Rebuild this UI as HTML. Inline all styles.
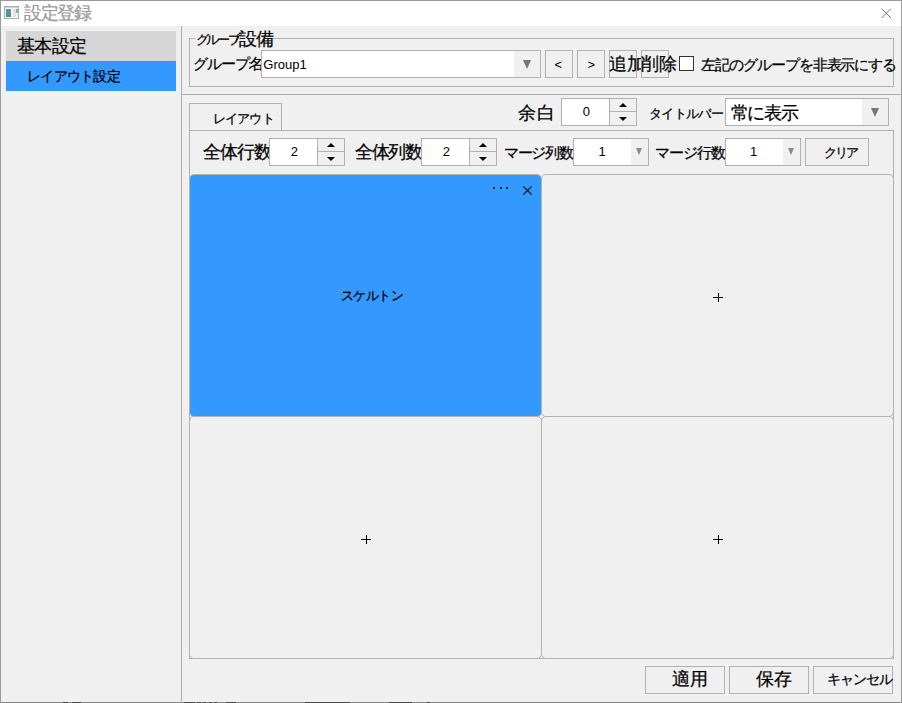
<!DOCTYPE html>
<html><head><meta charset="utf-8">
<style>
*{box-sizing:border-box;margin:0;padding:0}
html,body{width:902px;height:703px;overflow:hidden;background:#f0f0f0}
body{position:relative;font-family:"Liberation Sans",sans-serif;font-size:12px;color:#000}
.a{position:absolute}
.t{position:absolute;white-space:nowrap;line-height:20px;height:20px}
.j{-webkit-text-stroke:0.25px currentColor}
.tri{position:absolute;width:0;height:0;border-left:4.5px solid transparent;border-right:4.5px solid transparent;border-top:9px solid #777}
.tri2{position:absolute;width:0;height:0;border-left:3.5px solid transparent;border-right:3.5px solid transparent;border-top:7px solid #888}
.up{position:absolute;width:0;height:0;border-left:4px solid transparent;border-right:4px solid transparent;border-bottom:4px solid #000}
.dn{position:absolute;width:0;height:0;border-left:4px solid transparent;border-right:4px solid transparent;border-top:4px solid #000}
.cell{position:absolute;border:1px solid #b4b4b4;border-radius:5px;background:#f0f0f0}
</style></head><body>
<div class="a" style="left:0px;top:0px;width:902px;height:703px;border:1px solid #9a9a9a;border-bottom-color:#858585"></div>
<div class="a" style="left:1px;top:1px;width:900px;height:25px;background:#fff"></div>
<div class="a" style="left:4px;top:6px;width:15px;height:13px;border:1px solid #aab0b6;background:#f6f6f6">
  <div class="a" style="left:0;top:0;width:13px;height:1px;background:#cfd3d8"></div>
  <div class="a" style="left:1px;top:2px;width:5px;height:8px;background:linear-gradient(#5f8ec8,#3da552)"></div>
  <div class="a" style="left:8px;top:2px;width:3px;height:8px;background:#e2e2e2"></div>
  <div class="a" style="left:11px;top:2px;width:2px;height:4px;background:linear-gradient(#7aa3d6,#7cc47a)"></div>
</div>
<div class="t j" style="left:23.75px;top:2.88px;font-size:17.5px;letter-spacing:-1.18px;color:#9a9a9a">設定登録</div>
<svg class="a" style="left:880px;top:7px" width="13" height="12" viewBox="0 0 13 12"><path d="M1.6 1.6L11 11M11 1.6L1.6 11" stroke="#707070" stroke-width="0.95"/></svg>
<div class="a" style="left:6px;top:31px;width:170px;height:30px;background:#d6d6d6"></div>
<div class="t j" style="left:16.69px;top:36.38px;font-size:17.5px;letter-spacing:-0.50px">基本設定</div>
<div class="a" style="left:6px;top:61px;width:170px;height:30px;background:#3399ff"></div>
<div class="t j" style="left:27.08px;top:66.70px;font-size:13.61px;letter-spacing:-0.73px">レイアウト設定</div>
<div class="a" style="left:181px;top:26px;width:1px;height:677px;background:#acacac"></div>
<div class="a" style="left:189px;top:38px;width:705px;height:49px;border:1px solid #b0b0b0"></div>
<div class="a" style="left:195px;top:30px;width:73px;height:16px;background:#f0f0f0"></div>
<div class="t j" style="left:195.63px;top:29.55px;font-size:12.5px;letter-spacing:-2.14px">グループ</div>
<div class="t" style="left:235px;top:28.5px;font-size:13px">/</div>
<div class="t j" style="left:238.81px;top:28.50px;font-size:17.5px;letter-spacing:-0.65px">設備</div>
<div class="t j" style="left:193.18px;top:53.88px;font-size:15.19px;letter-spacing:-1.04px">グループ名</div>
<div class="t" style="left:248.0px;top:54.5px;font-size:13px">:</div>
<div class="a" style="left:261px;top:50px;width:280px;height:28px;border:1px solid #b0b0b0;background:#fff"></div>
<div class="a" style="left:514px;top:51px;width:26px;height:26px;background:#f0f0f0"></div>
<div class="tri" style="left:522.5px;top:60px"></div>
<div class="t" style="left:263.3px;top:55.3px;font-size:13px">Group1</div>
<div class="a" style="left:545px;top:50px;width:28px;height:28px;border:1px solid #b0b0b0;background:#f0f0f0"></div>
<div class="t" style="left:554.5px;top:55px;font-size:13px">&lt;</div>
<div class="a" style="left:577px;top:50px;width:28px;height:28px;border:1px solid #b0b0b0;background:#f0f0f0"></div>
<div class="t" style="left:587.5px;top:55px;font-size:13px">&gt;</div>
<div class="a" style="left:609px;top:50px;width:28px;height:28px;border:1px solid #b0b0b0;background:#f0f0f0"></div>
<div class="t j" style="left:609.25px;top:53.56px;font-size:17.5px;letter-spacing:-0.09px">追加</div>
<div class="a" style="left:641px;top:50px;width:28px;height:28px;border:1px solid #b0b0b0;background:#f0f0f0"></div>
<div class="t j" style="left:641.31px;top:53.56px;font-size:17.5px;letter-spacing:-0.59px">削除</div>
<div class="a" style="left:679px;top:56px;width:15px;height:15px;border:1px solid #333;background:#fff"></div>
<div class="t j" style="left:700.69px;top:54.61px;font-size:15.12px;letter-spacing:-1.02px">左記のグループを非表示にする</div>
<div class="a" style="left:181px;top:94px;width:721px;height:1px;background:#acacac"></div>
<div class="t j" style="left:518.43px;top:102.56px;font-size:17.5px;letter-spacing:0.79px">余白</div>
<div class="t" style="left:549.2px;top:103.5px;font-size:13px">:</div>
<div class="a" style="left:561px;top:98px;width:76px;height:28px;border:1px solid #b0b0b0;background:#fff"></div>
<div class="a" style="left:609px;top:99px;width:27px;height:26px;background:#f0f0f0;border-left:1px solid #b0b0b0"></div>
<div class="a" style="left:610px;top:111px;width:26px;height:1px;background:#b0b0b0"></div>
<div class="up" style="left:619px;top:103px"></div>
<div class="dn" style="left:619px;top:117px"></div>
<div class="t" style="left:582.7px;top:102px;font-size:13px">0</div>
<div class="t j" style="left:648.71px;top:103.96px;font-size:12.89px;letter-spacing:-0.58px">タイトルバー</div>
<div class="t" style="left:708.5px;top:103.5px;font-size:13px">:</div>
<div class="a" style="left:725px;top:98px;width:164px;height:28px;border:1px solid #b0b0b0;background:#fff"></div>
<div class="a" style="left:862px;top:99px;width:26px;height:26px;background:#f0f0f0"></div>
<div class="tri" style="left:870.5px;top:108px"></div>
<div class="t j" style="left:730.69px;top:103.26px;font-size:17.5px;letter-spacing:-1.33px">常に表示</div>
<div class="a" style="left:189px;top:130px;width:705px;height:529px;border:1px solid #b0b0b0"></div>
<div class="a" style="left:189px;top:103px;width:93px;height:27px;border:1px solid #b0b0b0;border-bottom:none;background:#f0f0f0"></div>
<div class="t j" style="left:213.07px;top:108.96px;font-size:12.5px;letter-spacing:-0.86px">レイアウト</div>
<div class="t j" style="left:202.93px;top:141.94px;font-size:17.5px;letter-spacing:-1.07px">全体行数</div>
<div class="t" style="left:256.9px;top:142.5px;font-size:13px">:</div>
<div class="a" style="left:269px;top:138px;width:76px;height:28px;border:1px solid #b0b0b0;background:#fff"></div>
<div class="a" style="left:317px;top:139px;width:27px;height:26px;background:#f0f0f0;border-left:1px solid #b0b0b0"></div>
<div class="a" style="left:318px;top:151px;width:26px;height:1px;background:#b0b0b0"></div>
<div class="up" style="left:327px;top:143px"></div>
<div class="dn" style="left:327px;top:157px"></div>
<div class="t" style="left:290.7px;top:142px;font-size:13px">2</div>
<div class="t j" style="left:355.25px;top:141.94px;font-size:17.5px;letter-spacing:-1.39px">全体列数</div>
<div class="t" style="left:409.1px;top:142.5px;font-size:13px">:</div>
<div class="a" style="left:421px;top:138px;width:76px;height:28px;border:1px solid #b0b0b0;background:#fff"></div>
<div class="a" style="left:469px;top:139px;width:27px;height:26px;background:#f0f0f0;border-left:1px solid #b0b0b0"></div>
<div class="a" style="left:470px;top:151px;width:26px;height:1px;background:#b0b0b0"></div>
<div class="up" style="left:479px;top:143px"></div>
<div class="dn" style="left:479px;top:157px"></div>
<div class="t" style="left:442.7px;top:142px;font-size:13px">2</div>
<div class="t j" style="left:503.61px;top:142.99px;font-size:15.33px;letter-spacing:-1.07px">マージ列数</div>
<div class="t" style="left:560.9px;top:142.5px;font-size:13px">:</div>
<div class="a" style="left:573px;top:138px;width:76px;height:28px;border:1px solid #b0b0b0;background:#fff"></div>
<div class="a" style="left:631px;top:139px;width:17px;height:26px;background:#f0f0f0"></div>
<div class="tri2" style="left:636px;top:148px"></div>
<div class="t" style="left:598.5px;top:142px;font-size:13px">1</div>
<div class="t j" style="left:655.19px;top:142.99px;font-size:15.08px;letter-spacing:-1.02px">マージ行数</div>
<div class="t" style="left:712.5px;top:142.5px;font-size:13px">:</div>
<div class="a" style="left:725px;top:138px;width:76px;height:28px;border:1px solid #b0b0b0;background:#fff"></div>
<div class="a" style="left:783px;top:139px;width:17px;height:26px;background:#f0f0f0"></div>
<div class="tri2" style="left:788px;top:148px"></div>
<div class="t" style="left:750px;top:142px;font-size:13px">1</div>
<div class="a" style="left:805px;top:138px;width:64px;height:28px;border:1px solid #b0b0b0;background:#f0f0f0"></div>
<div class="t j" style="left:823.57px;top:142.64px;font-size:12.5px;letter-spacing:-1.80px">クリア</div>
<div class="cell" style="left:189px;top:174px;width:353px;height:243px;background:#3399ff;border-color:#bdb3a8"></div>
<div class="cell" style="left:541px;top:174px;width:353px;height:243px"></div>
<div class="cell" style="left:189px;top:416px;width:353px;height:243px"></div>
<div class="cell" style="left:541px;top:416px;width:353px;height:243px"></div>
<div class="t j" style="left:340.72px;top:285.96px;font-size:12.76px;letter-spacing:-0.55px">スケルトン</div>
<div class="a" style="left:493px;top:187px;width:2.4px;height:2.4px;background:#000;border-radius:1.2px"></div>
<div class="a" style="left:499.5px;top:187px;width:2.4px;height:2.4px;background:#000;border-radius:1.2px"></div>
<div class="a" style="left:505.5px;top:187px;width:2.4px;height:2.4px;background:#000;border-radius:1.2px"></div>
<svg class="a" style="left:522px;top:185px" width="11" height="11" viewBox="0 0 11 11"><path d="M1.3 1.3L9.7 9.7M9.7 1.3L1.3 9.7" stroke="#000" stroke-width="1.15"/></svg>
<svg class="a" style="left:712px;top:292px" width="12" height="11" viewBox="0 0 12 11"><path d="M1 5.5H11M6.5 1V10" stroke="#000" stroke-width="1"/></svg>
<svg class="a" style="left:360px;top:534px" width="12" height="11" viewBox="0 0 12 11"><path d="M1 5.5H11M6.5 1V10" stroke="#000" stroke-width="1"/></svg>
<svg class="a" style="left:712px;top:534px" width="12" height="11" viewBox="0 0 12 11"><path d="M1 5.5H11M6.5 1V10" stroke="#000" stroke-width="1"/></svg>
<div class="a" style="left:63px;top:702px;width:5px;height:1px;background:#4a4a4a"></div>
<div class="a" style="left:72px;top:702px;width:9px;height:1px;background:#4a4a4a"></div>
<div class="a" style="left:184px;top:702px;width:11px;height:1px;background:#4a4a4a"></div>
<div class="a" style="left:197px;top:702px;width:4px;height:1px;background:#4a4a4a"></div>
<div class="a" style="left:203px;top:702px;width:3px;height:1px;background:#4a4a4a"></div>
<div class="a" style="left:209px;top:702px;width:3px;height:1px;background:#4a4a4a"></div>
<div class="a" style="left:214px;top:702px;width:3px;height:1px;background:#4a4a4a"></div>
<div class="a" style="left:226px;top:702px;width:10px;height:1px;background:#4a4a4a"></div>
<div class="a" style="left:305px;top:702px;width:45px;height:1px;background:#4a4a4a"></div>
<div class="a" style="left:389px;top:702px;width:23px;height:1px;background:#4a4a4a"></div>
<div class="a" style="left:427px;top:702px;width:3px;height:1px;background:#4a4a4a"></div>
<div class="a" style="left:645px;top:666px;width:80px;height:28px;border:1px solid #b0b0b0;background:#f0f0f0"></div>
<div class="t j" style="left:671.65px;top:669.20px;font-size:17.5px;letter-spacing:0.45px">適用</div>
<div class="a" style="left:729px;top:666px;width:80px;height:28px;border:1px solid #b0b0b0;background:#f0f0f0"></div>
<div class="t j" style="left:755.85px;top:669.20px;font-size:17.5px;letter-spacing:0.35px">保存</div>
<div class="a" style="left:813px;top:666px;width:80px;height:28px;border:1px solid #b0b0b0;background:#f0f0f0"></div>
<div class="t j" style="left:826.86px;top:669.20px;font-size:14.4px;letter-spacing:-0.88px">キャンセル</div>
</body></html>
